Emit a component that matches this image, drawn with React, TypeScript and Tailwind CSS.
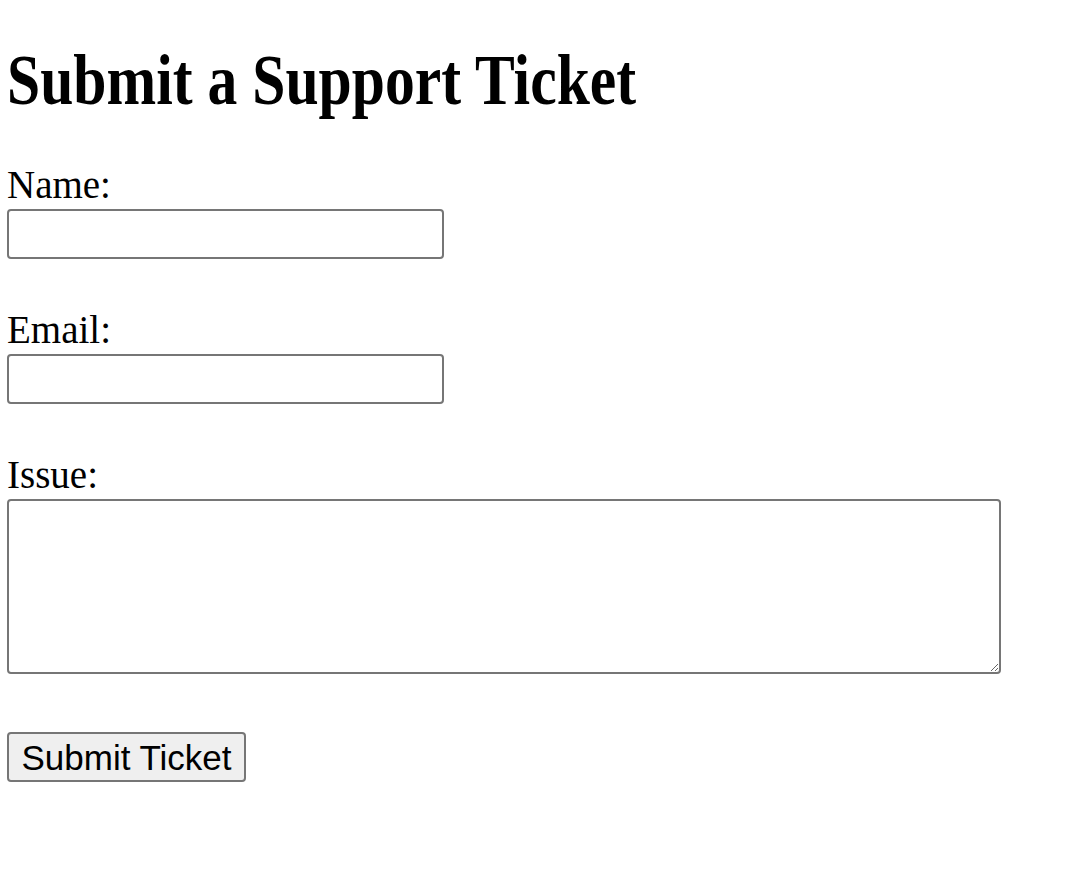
import React from "react";

export default function App() {
	const [name, setName] = React.useState("");
	const [email, setEmail] = React.useState("");
	const [issue, setIssue] = React.useState("");

	const labelCls = "block text-[39px] leading-[45px] text-black";
	const boxCls =
		"block mt-[2px] h-[50px] border-2 border-[#767676] rounded-[4px] bg-white px-1 text-[26px] outline-none";

	return (
		<div className="min-h-[889px] bg-white pl-[7px] font-['Liberation_Serif','Times_New_Roman',serif]">
			<h1 className="pt-[35px] text-[71px] leading-[90px] font-bold whitespace-nowrap origin-left scale-x-[0.84]">
				Submit a Support Ticket
			</h1>

			<form className="flex flex-col items-start mt-[37px]" onSubmit={(e) => e.preventDefault()}>
				<label htmlFor="name" className={labelCls}>Name:</label>
				<input
					id="name"
					type="text"
					value={name}
					onChange={(e) => setName(e.target.value)}
					className={boxCls + " w-[437px]"}
				/>

				<label htmlFor="email" className={labelCls + " mt-[48px]"}>Email:</label>
				<input
					id="email"
					type="email"
					value={email}
					onChange={(e) => setEmail(e.target.value)}
					className={boxCls + " w-[437px]"}
				/>

				<label htmlFor="issue" className={labelCls + " mt-[48px]"}>Issue:</label>
				<textarea
					id="issue"
					value={issue}
					onChange={(e) => setIssue(e.target.value)}
					className="block mt-[2px] w-[994px] h-[175px] border-2 border-[#767676] rounded-[4px] bg-white px-1 text-[26px] outline-none resize"
				/>

				<button
					type="submit"
					className="mt-[58px] h-[50px] w-[239px] border-2 border-[#767676] rounded-[4px] bg-[#efefef] text-[35px] leading-none text-black font-['Liberation_Sans',Arial,sans-serif]"
				>
					Submit Ticket
				</button>
			</form>
		</div>
	);
}
